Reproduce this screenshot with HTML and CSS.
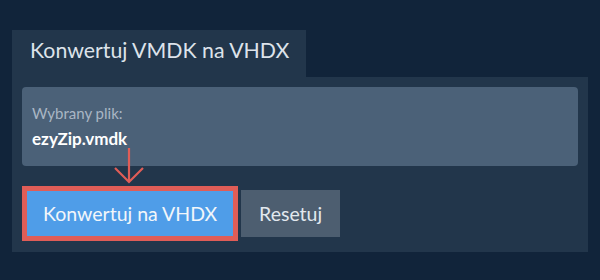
FILE: index.html
```html
<!DOCTYPE html>
<html lang="pl">
<head>
  <meta charset="UTF-8" />
  <meta name="viewport" content="width=device-width, initial-scale=1.0" />
  <title>Konwertuj VMDK na VHDX</title>
  <link rel="stylesheet" href="styles.css">
</head>
<body>
  <div class="tab">Konwertuj VMDK na VHDX</div>
  <div class="panel">
    <div class="file-box">
      <div class="file-label">Wybrany plik:</div>
      <div class="file-name">ezyZip.vmdk</div>
    </div>
    <div class="actions">
      <button class="btn btn-convert">Konwertuj na VHDX</button>
      <button class="btn btn-reset">Resetuj</button>
    </div>
    <svg class="arrow" width="32" height="38" viewBox="0 0 32 38">
      <path d="M16 1 V35 M2 21 L16 35 L30 21" fill="none" stroke="#e05d57" stroke-width="2.2" />
    </svg>
  </div>
</body>
</html>
```

FILE: styles.css
```css
body {
  margin: 0;
  padding: 30px 12px 0;
  background: #11243a;
  font-family: Lato, "Open Sans", sans-serif;
}
.tab {
  display: inline-block;
  box-sizing: border-box;
  height: 47px;
  line-height: 40px;
  padding: 0 17px 0 18px;
  background: #22364b;
  color: #dde3ea;
  font-size: 21.3px;
  vertical-align: top;
}
.panel {
  position: relative;
  background: #22364b;
  padding: 10px 10px 11px;
}
.file-box {
  background: #4b6178;
  border-radius: 4px;
  height: 79px;
  box-sizing: border-box;
  padding: 16px 10px 0;
}
.file-label {
  color: #a9b6c4;
  font-size: 15px;
  line-height: 20px;
}
.file-name {
  margin-top: 6px;
  color: #ffffff;
  font-size: 17px;
  font-weight: bold;
  line-height: 20px;
}
.actions {
  display: flex;
  align-items: center;
  gap: 3px;
  margin-top: 20px;
}
.btn {
  font-family: Lato, "Open Sans", sans-serif;
  font-size: 19.5px;
  color: #f2f6fa;
  border: none;
  height: 47px;
  padding: 0 18px;
  cursor: pointer;
}
.btn-convert {
  background: #4f9de8;
  border: 5px solid #e05d57;
  height: 55px;
  padding: 0 16px;
}
.btn-reset {
  background: #4d5e70;
  color: #e2e8ee;
}
.arrow {
  position: absolute;
  left: 101px;
  top: 70px;
}
```
